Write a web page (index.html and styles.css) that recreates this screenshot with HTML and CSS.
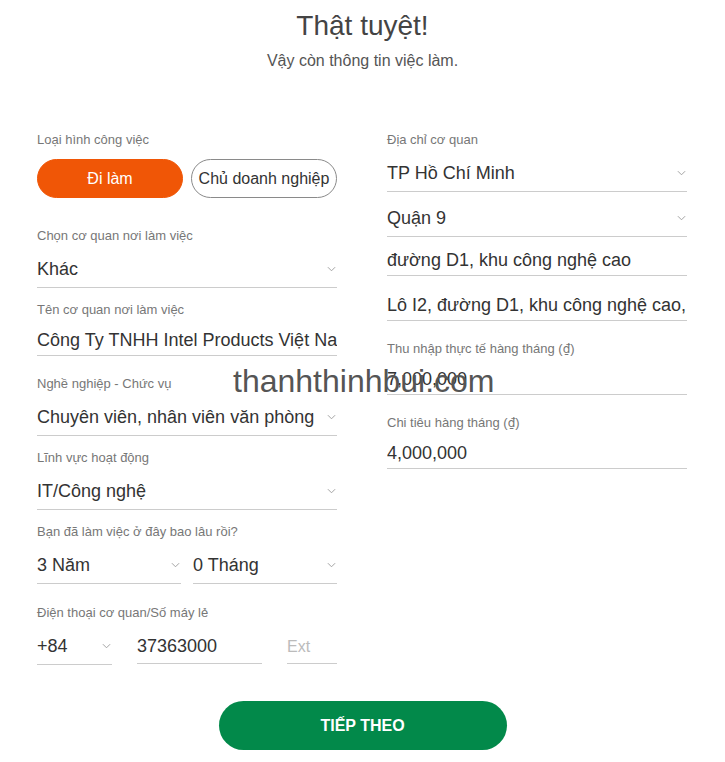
FILE: index.html
```html
<!DOCTYPE html>
<html lang="vi">
<head>
    <meta charset="UTF-8">
    <meta name="viewport" content="width=device-width, initial-scale=1.0">
    <title>Thông tin việc làm</title>
    <link rel="stylesheet" href="styles.css">
</head>
<body>
    <div class="page">
        <h1>Thật tuyệt!</h1>
        <p class="subtitle">Vậy còn thông tin việc làm.</p>

        <form class="job-form" id="jobForm">
            <div class="column">
                <div class="field field-type">
                    <label>Loại hình công việc</label>
                    <div class="type-buttons">
                        <button type="button" class="pill active">Đi làm</button>
                        <button type="button" class="pill">Chủ doanh nghiệp</button>
                    </div>
                </div>

                <div class="field">
                    <label>Chọn cơ quan nơi làm việc</label>
                    <div class="select">
                        <span>Khác</span>
                        <svg class="chevron" viewBox="0 0 10 6"><path d="M1 1l4 4 4-4"/></svg>
                    </div>
                </div>

                <div class="field">
                    <label for="company">Tên cơ quan nơi làm việc</label>
                    <input class="text" type="text" id="company" value="Công Ty TNHH Intel Products Việt Nam">
                </div>

                <div class="field">
                    <label>Nghề nghiệp - Chức vụ</label>
                    <div class="select">
                        <span>Chuyên viên, nhân viên văn phòng</span>
                        <svg class="chevron" viewBox="0 0 10 6"><path d="M1 1l4 4 4-4"/></svg>
                    </div>
                </div>

                <div class="field">
                    <label>Lĩnh vực hoạt động</label>
                    <div class="select">
                        <span>IT/Công nghệ</span>
                        <svg class="chevron" viewBox="0 0 10 6"><path d="M1 1l4 4 4-4"/></svg>
                    </div>
                </div>

                <div class="field field-duration">
                    <label>Bạn đã làm việc ở đây bao lâu rồi?</label>
                    <div class="row-two">
                        <div class="select">
                            <span>3 Năm</span>
                            <svg class="chevron" viewBox="0 0 10 6"><path d="M1 1l4 4 4-4"/></svg>
                        </div>
                        <div class="select">
                            <span>0 Tháng</span>
                            <svg class="chevron" viewBox="0 0 10 6"><path d="M1 1l4 4 4-4"/></svg>
                        </div>
                    </div>
                </div>

                <div class="field field-last">
                    <label>Điện thoại cơ quan/Số máy lẻ</label>
                    <div class="row-phone">
                        <div class="select">
                            <span>+84</span>
                            <svg class="chevron" viewBox="0 0 10 6"><path d="M1 1l4 4 4-4"/></svg>
                        </div>
                        <input class="text phone" type="text" value="37363000">
                        <input class="text phone" type="text" placeholder="Ext">
                    </div>
                </div>
            </div>

            <div class="column">
                <div class="field field-address">
                    <label>Địa chỉ cơ quan</label>
                    <div class="select">
                        <span>TP Hồ Chí Minh</span>
                        <svg class="chevron" viewBox="0 0 10 6"><path d="M1 1l4 4 4-4"/></svg>
                    </div>
                    <div class="select stacked">
                        <span>Quận 9</span>
                        <svg class="chevron" viewBox="0 0 10 6"><path d="M1 1l4 4 4-4"/></svg>
                    </div>
                    <input class="text stacked" type="text" value="đường D1, khu công nghệ cao">
                    <input class="text stacked-wide" type="text" value="Lô I2, đường D1, khu công nghệ cao, Quận 9">
                </div>

                <div class="field">
                    <label for="income">Thu nhập thực tế hàng tháng (<span class="dong">₫</span>)</label>
                    <input class="text" type="text" id="income" value="7,000,000">
                </div>

                <div class="field">
                    <label for="spend">Chi tiêu hàng tháng (<span class="dong">₫</span>)</label>
                    <input class="text" type="text" id="spend" value="4,000,000">
                </div>
            </div>

            <div class="watermark">thanhthinhbui.com</div>
        </form>

        <div class="actions">
            <button type="submit" form="jobForm" class="next">TIẾP THEO</button>
        </div>
    </div>
</body>
</html>
```

FILE: styles.css
```css
body {
    font-family: "Liberation Sans", Arial, sans-serif;
    margin: 0;
    padding: 0;
    background-color: #fff;
    color: #333;
}
.page {
    width: 651px;
    margin: 0 auto;
    padding-top: 9px;
}
h1 {
    margin: 0;
    font-size: 28px;
    font-weight: normal;
    line-height: 34px;
    text-align: center;
    color: #444;
}
.subtitle {
    margin: 8px 0 0;
    font-size: 16px;
    line-height: 20px;
    text-align: center;
    color: #555;
}
.job-form {
    display: grid;
    grid-template-columns: 300px 300px;
    column-gap: 50px;
    margin-top: 61px;
    position: relative;
}
.field {
    display: flex;
    flex-direction: column;
    height: 74px;
}
.field-type {
    height: 96px;
}
.field-duration {
    height: 81px;
}
.field-address {
    height: 209px;
}
.field-last {
    height: 60px;
}
label {
    display: block;
    font-size: 13px;
    line-height: 16px;
    height: 16px;
    color: #777;
}
.dong {
    font-family: "DejaVu Sans", sans-serif;
    font-size: 12px;
}
.type-buttons {
    display: flex;
    gap: 8px;
    margin-top: 11px;
}
.pill {
    flex: 1;
    height: 39px;
    border: 1px solid #8a8a8a;
    border-radius: 20px;
    background-color: #fff;
    color: #333;
    font-family: inherit;
    font-size: 16px;
    padding: 0;
    cursor: pointer;
}
.pill.active {
    background-color: #f05606;
    border-color: #f05606;
    color: #fff;
}
.select {
    display: flex;
    align-items: center;
    justify-content: space-between;
    height: 36px;
    margin-top: 8px;
    box-sizing: border-box;
    border-bottom: 1px solid #ccc;
    font-size: 18px;
    color: #333;
    white-space: nowrap;
    padding-bottom: 1px;
}
.chevron {
    width: 9px;
    height: 6px;
    margin-right: 1px;
    fill: none;
    stroke: #999;
    stroke-width: 1;
    flex-shrink: 0;
}
.text {
    display: block;
    width: 100%;
    height: 30px;
    margin: 8px 0 0;
    padding: 0 0 1px;
    border: 0;
    border-bottom: 1px solid #ccc;
    border-radius: 0;
    box-sizing: border-box;
    font-family: inherit;
    font-size: 18px;
    color: #333;
    background: transparent;
    outline: none;
}
.text::placeholder {
    color: #bbb;
    font-size: 16px;
}
.stacked {
    margin-top: 9px;
}
.text.stacked-wide {
    margin-top: 15px;
}
.row-two {
    display: grid;
    grid-template-columns: 144px 144px;
    gap: 12px;
}
.row-phone {
    display: grid;
    grid-template-columns: 75px 125px 50px;
    gap: 25px;
}
.text.phone {
    height: 35px;
    padding-top: 2px;
}
.actions {
    display: flex;
    justify-content: center;
    margin-top: 36px;
}
.next {
    width: 288px;
    height: 49px;
    border: none;
    border-radius: 25px;
    background-color: #02894a;
    color: #fff;
    font-family: inherit;
    font-size: 16px;
    font-weight: bold;
    cursor: pointer;
}
.watermark {
    position: absolute;
    left: 196px;
    top: 233px;
    font-size: 32px;
    line-height: 32px;
    color: #555;
    pointer-events: none;
}
```
